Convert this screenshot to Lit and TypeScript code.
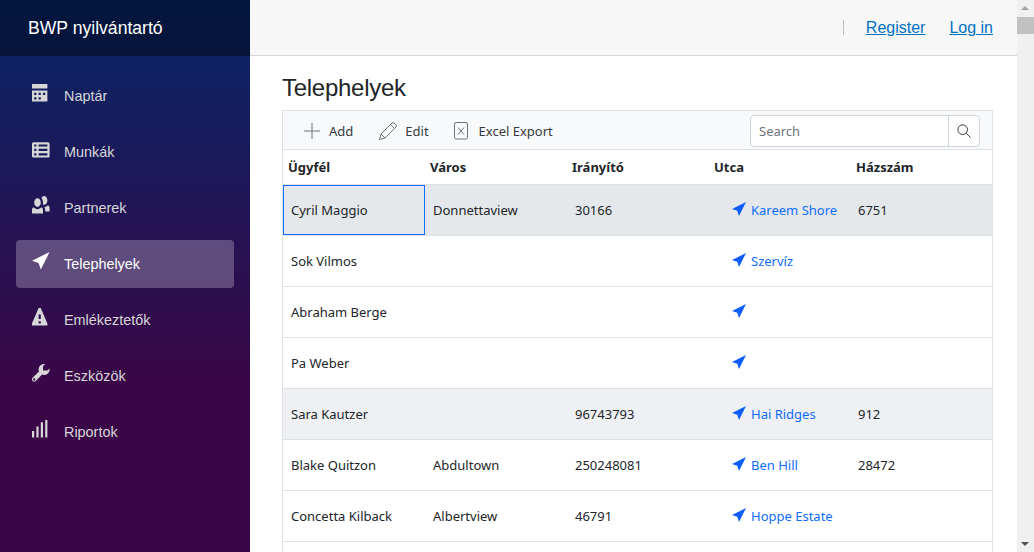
import { LitElement, html, css, svg } from "lit";
import { customElement } from "lit/decorators.js";

const navIcons: Record<string, unknown> = {
  calendar: svg`<path d="M0 0v2h7v-2h-7zm0 3v4.910c0 .05.04.09.09.09h6.810c.05 0 .09-.04.09-.09v-4.910h-7zm1 1h1v1h-1v-1zm2 0h1v1h-1v-1zm2 0h1v1h-1v-1zm-4 2h1v1h-1v-1zm2 0h1v1h-1v-1z"/>`,
  list: svg`<path transform="translate(0 1)" d="M.75 0c-.41 0-.75.34-.75.75v5.500c0 .41.34.75.75.75h6.500c.41 0 .75-.34.75-.75v-5.500c0-.41-.34-.75-.75-.75h-6.500zm.25 1h1v1h-1v-1zm2 0h4v1h-4v-1zm-2 2h1v1h-1v-1zm2 0h4v1h-4v-1zm-2 2h1v1h-1v-1zm2 0h4v1h-4v-1z"/>`,
  people: svg`<path d="M5.500 0c-.51 0-.95.35-1.220.88.45.54.720 1.280.720 2.130 0 .29-.03.55-.09.81.19.11.380.190.590.190.83 0 1.500-.9 1.500-2s-.67-2-1.500-2zm-3 1c-.83 0-1.500.9-1.500 2s.67 2 1.500 2 1.500-.9 1.500-2-.67-2-1.500-2zm4.750 3.160c-.43.51-1.020.82-1.690.84.27.38.440.840.440 1.340v.660h2v-1.660c0-.52-.31-.97-.75-1.180zm-6.500 1c-.44.21-.75.66-.75 1.180v1.660h5v-1.660c0-.52-.31-.97-.75-1.180-.45.53-1.060.840-1.750.840s-1.300-.32-1.750-.840z"/>`,
  location: svg`<path d="M8 0l-8 4 3 1 1 3 4-8z"/>`,
  warning: svg`<path d="M3.090 0c-.06 0-.1.04-.13.090l-2.940 6.810c-.02.05-.03.130-.03.190v.81c0 .05.040.09.090.09h6.810c.05 0 .09-.04.09-.09v-.81c0-.05-.01-.14-.03-.19l-2.940-6.810c-.02-.05-.07-.09-.13-.09h-.81zm-.09 3h1v2h-1v-2zm0 3h1v1h-1v-1z"/>`,
  wrench: svg`<path d="M5.500 0c-1.380 0-2.500 1.120-2.500 2.500 0 .32.080.640.190.910l-2.910 2.880c-.39.39-.39 1.050 0 1.440.2.200.470.280.720.280.25 0 .520-.090.720-.280l2.880-2.910c.28.110.580.190.910.190 1.380 0 2.500-1.120 2.500-2.500 0-.16 0-.310-.030-.470l-.970.970h-2v-2l.970-.970c-.16-.03-.31-.03-.47-.03zm-4.500 6.500c.28 0 .5.220.5.500s-.22.500-.5.500-.5-.22-.5-.5.220-.5.500-.5z"/>`,
  signal: svg`<path d="M6 0v8h1v-8h-1zm-2 1v7h1v-7h-1zm-2 2v5h1v-5h-1zm-2 2v3h1v-3h-1z"/>`,
};

const nav = [
  { label: "Naptár", icon: "calendar" },
  { label: "Munkák", icon: "list" },
  { label: "Partnerek", icon: "people" },
  { label: "Telephelyek", icon: "location", active: true },
  { label: "Emlékeztetők", icon: "warning" },
  { label: "Eszközök", icon: "wrench" },
  { label: "Riportok", icon: "signal" },
];

const rows = [
  ["Cyril Maggio", "Donnettaview", "30166", "Kareem Shore", "6751"],
  ["Sok Vilmos", "", "", "Szervíz", ""],
  ["Abraham Berge", "", "", "", ""],
  ["Pa Weber", "", "", "", ""],
  ["Sara Kautzer", "", "96743793", "Hai Ridges", "912"],
  ["Blake Quitzon", "Abdultown", "250248081", "Ben Hill", "28472"],
  ["Concetta Kilback", "Albertview", "46791", "Hoppe Estate", ""],
  ["", "", "", "", ""],
];

@customElement("app-root")
export class AppRoot extends LitElement {
  static styles = css`
    :host {
      display: flex;
      height: 552px;
      overflow: hidden;
      font-family: "Liberation Sans", Arial, sans-serif;
      background: #fff;
    }
    .sidebar {
      width: 250px;
      flex: none;
      display: flex;
      flex-direction: column;
      background-image: linear-gradient(180deg, rgb(5, 39, 103) 0%, #3a0647 70%);
    }
    .brand {
      height: 56px;
      flex: none;
      box-sizing: border-box;
      padding-left: 28px;
      display: flex;
      align-items: center;
      background: rgba(0, 0, 0, 0.4);
      color: #fff;
      font-size: 17.6px;
    }
    .nav {
      padding: 16px 16px 0;
      display: flex;
      flex-direction: column;
      gap: 8px;
    }
    .nav-link {
      height: 48px;
      display: flex;
      align-items: center;
      padding-left: 16px;
      border-radius: 4px;
      color: #d7d7d7;
      font-size: 14.4px;
    }
    .nav-link.active {
      background: rgba(255, 255, 255, 0.25);
      color: #fff;
    }
    .nav-icon {
      width: 32px;
      flex: none;
      display: flex;
      align-self: flex-start;
      margin-top: 12px;
    }
    .nav-icon svg {
      width: 17.6px;
      height: 17.6px;
      fill: currentColor;
    }
    .main {
      flex: 1;
      min-width: 0;
      display: flex;
      flex-direction: column;
    }
    .top {
      height: 56px;
      flex: none;
      box-sizing: border-box;
      display: flex;
      align-items: center;
      justify-content: flex-end;
      padding-right: 24px;
      background: #f7f7f7;
      border-bottom: 1px solid #d6d5d5;
      font-size: 16px;
    }
    .sep {
      width: 1px;
      height: 15px;
      background: #c4bfb8;
      margin-right: 22px;
    }
    .top a {
      color: #0071c1;
      text-decoration: underline;
      margin-left: 24px;
    }
    .top a:first-of-type {
      margin-left: 0;
    }
    .content {
      padding: 17px 24px 0 32px;
    }
    h1 {
      margin: 0 0 7px;
      font-size: 24px;
      font-weight: 400;
      letter-spacing: -0.27px;
      line-height: 30px;
      color: #212529;
    }
    .grid {
      border: 1px solid #dee2e6;
      border-bottom: none;
      font-family: "Noto Sans", sans-serif;
      font-size: 13px;
      color: #212529;
    }
    .toolbar {
      height: 39px;
      box-sizing: border-box;
      display: flex;
      align-items: center;
      background: #f8f9fa;
      border-bottom: 1px solid #dee2e6;
      padding: 2px 12px 0 19px;
      color: #343a40;
    }
    .tool {
      display: flex;
      align-items: center;
      gap: 7px;
      margin-right: 24px;
    }
    .tool:first-child {
      margin-right: 25px;
    }
    .tool:nth-child(3) {
      margin-left: -1px;
    }
    .tool svg {
      width: 20px;
      height: 20px;
      flex: none;
      fill: none;
      stroke: #6c757d;
      stroke-width: 1;
    }
    .search {
      margin-left: auto;
      width: 230px;
      height: 32px;
      box-sizing: border-box;
      display: flex;
      background: #fff;
      border: 1px solid #ced4da;
      border-radius: 4px;
    }
    .search span {
      flex: 1;
      padding-left: 8px;
      line-height: 30px;
      color: #6c757d;
    }
    .search i {
      width: 30px;
      border-left: 1px solid #ced4da;
      display: flex;
      align-items: center;
      justify-content: center;
    }
    .search svg {
      width: 14px;
      height: 14px;
      fill: none;
      stroke: #343a40;
      stroke-width: 1.1;
    }
    .row {
      display: grid;
      grid-template-columns: repeat(5, 142px);
      height: 51px;
      box-sizing: border-box;
      align-items: center;
      border-bottom: 1px solid #dee2e6;
    }
    .row.head {
      height: 35px;
      font-weight: 700;
    }
    .row.head > div {
      padding-left: 5px;
    }
    .row.selected {
      background: #e5e8eb;
    }
    .row.alt {
      background: #eff0f3;
    }
    .cell {
      padding-left: 8px;
      height: 100%;
      display: flex;
      align-items: center;
      box-sizing: border-box;
      white-space: nowrap;
    }
    .cell.focus {
      border: 1px solid #0d6efd;
      padding-left: 7px;
    }
    .cell.num {
      padding-left: 7px;
    }
    .street {
      padding-left: 23px;
      gap: 5px;
      color: #0d6efd;
    }
    .street svg {
      width: 14px;
      height: 14px;
      flex: none;
      fill: #0d5dfd;
      margin-top: -2px;
    }
    .scrollbar {
      width: 17px;
      flex: none;
      position: relative;
      background: #f0f0f0;
    }
    .thumb {
      position: absolute;
      top: 17px;
      left: 0;
      width: 17px;
      height: 17px;
      background: #c1c1c1;
    }
    .arrow {
      position: absolute;
      left: 4px;
      width: 0;
      height: 0;
      border-left: 4px solid transparent;
      border-right: 4px solid transparent;
    }
    .arrow.up {
      top: 6px;
      border-bottom: 4px solid #a3a3a3;
    }
    .arrow.down {
      bottom: 6px;
      border-top: 4px solid #505050;
    }
  `;

  render() {
    return html`
      <aside class="sidebar">
        <div class="brand">BWP nyilvántartó</div>
        <nav class="nav">
          ${nav.map(
            (n) => html`
              <div class="nav-link ${n.active ? "active" : ""}">
                <span class="nav-icon"><svg viewBox="0 0 8 8">${navIcons[n.icon]}</svg></span>
                ${n.label}
              </div>
            `
          )}
        </nav>
      </aside>
      <div class="main">
        <header class="top">
          <span class="sep"></span>
          <a>Register</a>
          <a>Log in</a>
        </header>
        <section class="content">
          <h1>Telephelyek</h1>
          <div class="grid">
            <div class="toolbar">
              <span class="tool">
                <svg viewBox="0 0 20 20"><path d="M10 2v16M2 10h16" /></svg>Add
              </span>
              <span class="tool">
                <svg viewBox="0 0 20 20"><path d="M1.500 18.500L3 13 14 2q1-1 2 0l2 2q1 1 0 2L7 17zM3 13l4 4M12.500 3.500l4 4" /></svg>Edit
              </span>
              <span class="tool">
                <svg viewBox="0 0 20 20"><rect x="2.500" y="1.500" width="13" height="16.500" rx="1.500" /><path d="M6 6.500l6 7M12 6.500l-6 7" /></svg>Excel Export
              </span>
              <div class="search">
                <span>Search</span>
                <i><svg viewBox="0 0 16 16"><circle cx="6.500" cy="6.500" r="5.500" /><path d="M10.500 10.500l5 5" /></svg></i>
              </div>
            </div>
            <div class="row head">
              <div>Ügyfél</div><div>Város</div><div>Irányító</div><div>Utca</div><div>Házszám</div>
            </div>
            ${rows.map(
              (r, i) => html`
                <div class="row ${i === 0 ? "selected" : ""} ${i === 4 ? "alt" : ""}">
                  <div class="cell ${i === 0 ? "focus" : ""}">${r[0]}</div>
                  <div class="cell">${r[1]}</div>
                  <div class="cell">${r[2]}</div>
                  <div class="cell street">
                    ${i < 7
                      ? html`<svg viewBox="0 0 8 8">${navIcons.location}</svg>${r[3]}`
                      : ""}
                  </div>
                  <div class="cell num">${r[4]}</div>
                </div>
              `
            )}
          </div>
        </section>
      </div>
      <div class="scrollbar">
        <span class="arrow up"></span>
        <span class="thumb"></span>
        <span class="arrow down"></span>
      </div>
    `;
  }
}
